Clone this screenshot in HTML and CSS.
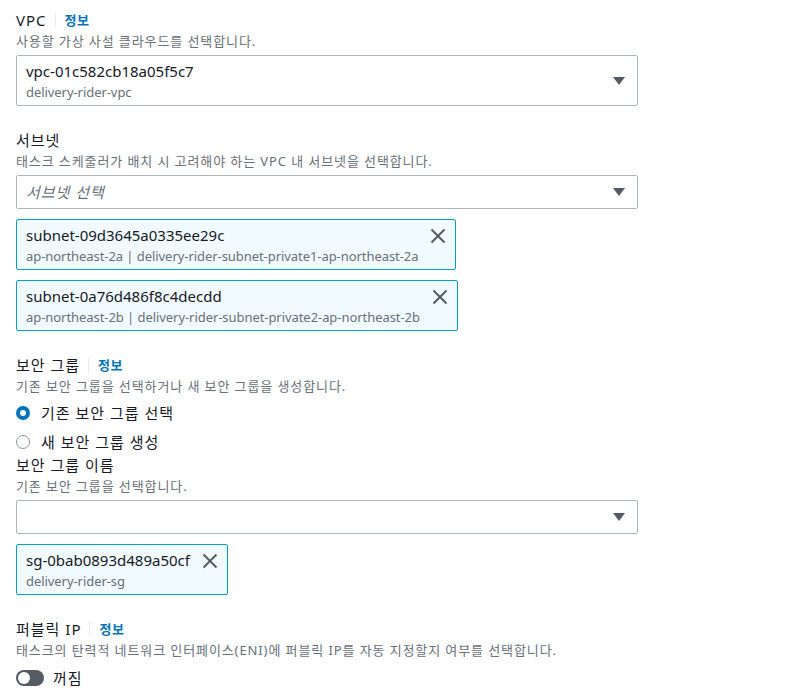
FILE: index.html
```html
<!DOCTYPE html>
<html lang="ko">
<head>
    <meta charset="UTF-8">
    <meta name="viewport" content="width=device-width, initial-scale=1.0">
    <title>네트워킹 - 서비스 생성</title>
    <link rel="stylesheet" href="styles.css">
</head>
<body>
<div class="page">

    <div class="field">
        <div class="field-label">VPC <span class="info">정보</span></div>
        <div class="field-desc">사용할 가상 사설 클라우드를 선택합니다.</div>
        <div class="select">
            <div class="select-value">
                <div class="value-main">vpc-01c582cb18a05f5c7</div>
                <div class="value-sub">delivery-rider-vpc</div>
            </div>
            <svg class="caret" width="12" height="8" viewBox="0 0 12 8"><path d="M0 0h12L6 8z" fill="#545b64"/></svg>
        </div>
    </div>

    <div class="field">
        <div class="field-label">서브넷</div>
        <div class="field-desc">태스크 스케줄러가 배치 시 고려해야 하는 VPC 내 서브넷을 선택합니다.</div>
        <div class="select select-short">
            <div class="select-value placeholder">서브넷 선택</div>
            <svg class="caret" width="12" height="8" viewBox="0 0 12 8"><path d="M0 0h12L6 8z" fill="#545b64"/></svg>
        </div>
        <div class="token-list">
            <div class="token">
                <div class="token-text">
                    <div class="value-main">subnet-09d3645a0335ee29c</div>
                    <div class="value-sub">ap-northeast-2a | delivery-rider-subnet-private1-ap-northeast-2a</div>
                </div>
                <span class="token-dismiss"><svg width="16" height="16" viewBox="0 0 16 16"><path d="M1.5 1.5l13 13M14.5 1.5l-13 13" stroke="#545b64" stroke-width="2" fill="none"/></svg></span>
            </div>
            <div class="token">
                <div class="token-text">
                    <div class="value-main">subnet-0a76d486f8c4decdd</div>
                    <div class="value-sub">ap-northeast-2b | delivery-rider-subnet-private2-ap-northeast-2b</div>
                </div>
                <span class="token-dismiss"><svg width="16" height="16" viewBox="0 0 16 16"><path d="M1.5 1.5l13 13M14.5 1.5l-13 13" stroke="#545b64" stroke-width="2" fill="none"/></svg></span>
            </div>
        </div>
    </div>

    <div class="field">
        <div class="field-label">보안 그룹 <span class="info">정보</span></div>
        <div class="field-desc">기존 보안 그룹을 선택하거나 새 보안 그룹을 생성합니다.</div>
        <div class="radio-group">
            <label class="radio"><span class="radio-dot checked"></span>기존 보안 그룹 선택</label>
            <label class="radio"><span class="radio-dot"></span>새 보안 그룹 생성</label>
        </div>
        <div class="field-label sub-label">보안 그룹 이름</div>
        <div class="field-desc">기존 보안 그룹을 선택합니다.</div>
        <div class="select select-short">
            <div class="select-value"></div>
            <svg class="caret" width="12" height="8" viewBox="0 0 12 8"><path d="M0 0h12L6 8z" fill="#545b64"/></svg>
        </div>
        <div class="token-list">
            <div class="token">
                <div class="token-text">
                    <div class="value-main">sg-0bab0893d489a50cf</div>
                    <div class="value-sub">delivery-rider-sg</div>
                </div>
                <span class="token-dismiss"><svg width="16" height="16" viewBox="0 0 16 16"><path d="M1.5 1.5l13 13M14.5 1.5l-13 13" stroke="#545b64" stroke-width="2" fill="none"/></svg></span>
            </div>
        </div>
    </div>

    <div class="field">
        <div class="field-label">퍼블릭 IP <span class="info">정보</span></div>
        <div class="field-desc">태스크의 탄력적 네트워크 인터페이스(ENI)에 퍼블릭 IP를 자동 지정할지 여부를 선택합니다.</div>
        <label class="toggle-row"><span class="toggle"><span class="knob"></span></span>꺼짐</label>
    </div>

</div>
</body>
</html>
```

FILE: styles.css
```css
body {
    margin: 0;
    background-color: #ffffff;
    color: #16191f;
    font-family: "Noto Sans", "Noto Sans CJK KR", sans-serif;
    font-size: 15px;
}
.page {
    width: 622px;
    padding: 9px 16px 0 16px;
}
.field {
    margin-bottom: 23px;
}
.field-label {
    display: flex;
    align-items: center;
    line-height: 22px;
    letter-spacing: 1px;
}
.sub-label {
    margin-top: 1px;
}
.info {
    margin-left: 8px;
    padding-left: 9px;
    border-left: 1px solid #eaeded;
    line-height: 16px;
    font-size: 13px;
    font-weight: bold;
    letter-spacing: 0.5px;
    color: #0073bb;
}
.field-desc {
    margin-top: 1px;
    line-height: 18px;
    font-size: 13px;
    letter-spacing: 0.9px;
    color: #687078;
}
.select {
    display: flex;
    align-items: center;
    margin-top: 5px;
    padding: 5px 12px 4px 9px;
    border: 1px solid #aab7b8;
    border-radius: 2px;
}
.select-short {
    height: 20px;
    padding-top: 6px;
    padding-bottom: 6px;
}
.select-value {
    flex: 1;
}
.placeholder {
    line-height: 20px;
    font-style: italic;
    letter-spacing: 1px;
    color: #687078;
}
.value-main {
    line-height: 20px;
}
.value-sub {
    margin-top: 2px;
    line-height: 18px;
    font-size: 13px;
    letter-spacing: -0.06px;
    color: #687078;
}
.token-list {
    display: flex;
    flex-direction: column;
    align-items: flex-start;
    gap: 10px;
    margin-top: 10px;
}
.token {
    display: flex;
    align-items: flex-start;
    padding: 5px 9px 4px 9px;
    border: 1px solid #00a1c9;
    border-radius: 2px;
    background-color: #f1faff;
}
.token-dismiss {
    display: flex;
    align-items: center;
    height: 22px;
    margin-left: 12px;
}
.radio-group {
    display: flex;
    flex-direction: column;
    gap: 7px;
    margin-top: 7px;
}
.radio {
    display: flex;
    align-items: center;
    gap: 11px;
    line-height: 22px;
    letter-spacing: 1px;
}
.radio-dot {
    width: 14px;
    height: 14px;
    box-sizing: border-box;
    border: 1.5px solid #879596;
    border-radius: 50%;
    background-color: #ffffff;
}
.radio-dot.checked {
    border: 4px solid #0073bb;
}
.toggle-row {
    display: flex;
    align-items: center;
    gap: 9px;
    margin-top: 8px;
    line-height: 22px;
    letter-spacing: 1px;
}
.toggle {
    display: flex;
    width: 28px;
    height: 16px;
    box-sizing: border-box;
    padding: 2px;
    border-radius: 8px;
    background-color: #545b64;
}
.knob {
    width: 12px;
    height: 12px;
    border-radius: 50%;
    background-color: #ffffff;
}
```
